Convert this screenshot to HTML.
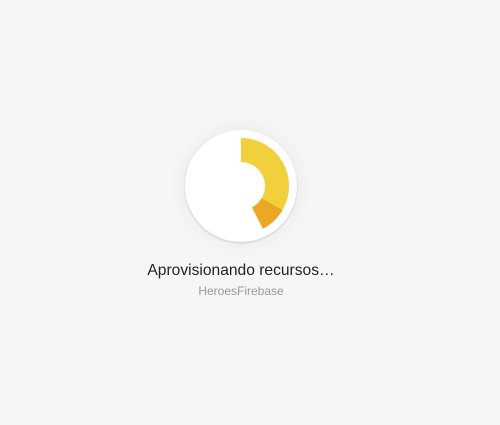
<!DOCTYPE html>
<html><head><style>
html,body{margin:0;padding:0;width:500px;height:425px;background:#f6f6f8;overflow:hidden;font-family:"Liberation Sans",Arial,sans-serif}
.c{position:absolute;left:185px;top:130px;width:112px;height:112px;border-radius:50%;background:#fff;box-shadow:0 0 24px rgba(0,0,0,0.06),0 1px 2px rgba(0,0,0,0.15)}
svg{position:absolute;left:0;top:0}
.t{position:absolute;left:0;width:482px;text-align:center;top:262px;font-size:15.6px;color:#222;letter-spacing:0}
.s{position:absolute;left:0;width:482px;text-align:center;top:284px;font-size:12px;color:#9a9a9e}
</style></head><body>
<div class="c">
<svg width="112" height="112" viewBox="0 0 112 112">
<g transform="translate(56,56)">
<path d="M0,-48 A48,48 0 0 1 41.6,24 L20.8,12 A24,24 0 0 0 0,-24 Z" fill="#f2d03b"/>
<path d="M41.6,24 A48,48 0 0 1 21.8,42.8 L10.9,21.4 A24,24 0 0 0 20.8,12 Z" fill="#eba824"/>
</g>
</svg>
</div>
<div class="t">Aprovisionando recursos…</div>
<div class="s">HeroesFirebase</div>
</body></html>
